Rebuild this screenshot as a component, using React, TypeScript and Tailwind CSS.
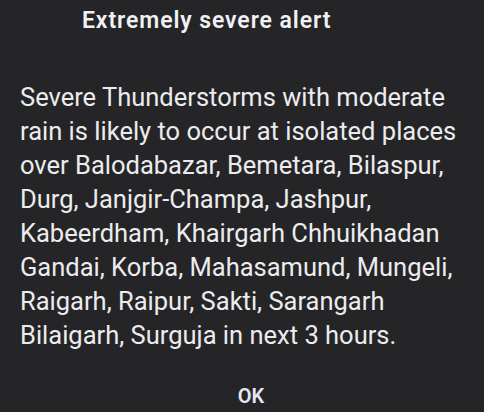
const lines = [
  'Severe Thunderstorms with moderate',
  'rain is likely to occur at isolated places',
  'over Balodabazar, Bemetara, Bilaspur,',
  'Durg, Janjgir-Champa, Jashpur,',
  'Kabeerdham, Khairgarh Chhuikhadan',
  'Gandai, Korba, Mahasamund, Mungeli,',
  'Raigarh, Raipur, Sakti, Sarangarh',
  'Bilaigarh, Surguja in next 3 hours.',
]

export default function App() {
  return (
    <div className="w-[484px] h-[412px] bg-[#252528] overflow-hidden font-['Roboto',sans-serif]">
      <div className="flex flex-col h-full">
        {/* dialog title */}
        <h1 className="pt-[7px] pl-[82px] text-[23px] leading-[28px] tracking-[0.9px] font-semibold text-[#f1f1f3]">
          Extremely severe alert
        </h1>

        {/* alert body, broken the way the system dialog wraps it */}
        <p className="mt-[45px] pl-[20px] text-[25.5px] leading-[34px] text-[#ececee] whitespace-nowrap">
          {lines.map((l, i) => (
            <span key={i} className="block">{l}</span>
          ))}
        </p>

        {/* action */}
        <div className="mt-auto pb-[3px] flex justify-center pl-[18px]">
          <button className="text-[20px] leading-[26px] font-semibold text-[#e4e8f6]">OK</button>
        </div>
      </div>
    </div>
  )
}
